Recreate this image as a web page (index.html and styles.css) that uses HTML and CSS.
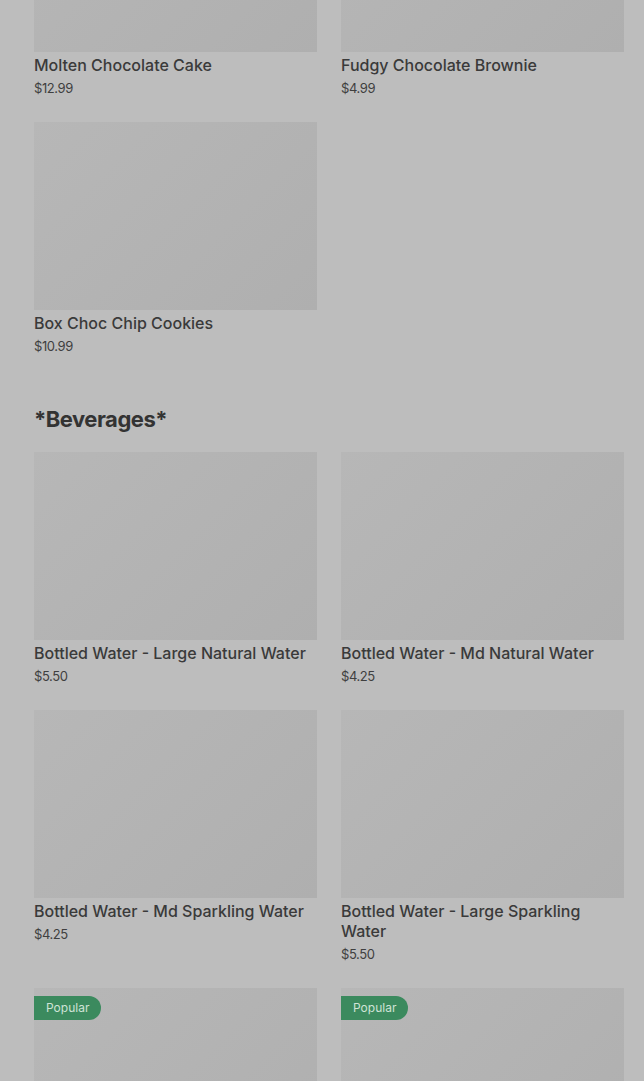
FILE: index.html
```html
<!DOCTYPE html>
<html lang="en">
<head>
    <meta charset="UTF-8">
    <meta name="viewport" content="width=device-width, initial-scale=1.0">
    <title>Menu</title>
    <link rel="stylesheet" href="styles.css">
</head>
<body>
    <div class="menu">
        <section class="category">
            <div class="item-grid">
                <div class="item">
                    <div class="item-image"></div>
                    <div class="item-name">Molten Chocolate Cake</div>
                    <div class="item-price">$12.99</div>
                </div>
                <div class="item">
                    <div class="item-image"></div>
                    <div class="item-name">Fudgy Chocolate Brownie</div>
                    <div class="item-price">$4.99</div>
                </div>
                <div class="item">
                    <div class="item-image"></div>
                    <div class="item-name">Box Choc Chip Cookies</div>
                    <div class="item-price">$10.99</div>
                </div>
            </div>
        </section>

        <section class="category">
            <h2 class="category-title">*Beverages*</h2>
            <div class="item-grid">
                <div class="item">
                    <div class="item-image"></div>
                    <div class="item-name">Bottled Water - Large Natural Water</div>
                    <div class="item-price">$5.50</div>
                </div>
                <div class="item">
                    <div class="item-image"></div>
                    <div class="item-name">Bottled Water - Md Natural Water</div>
                    <div class="item-price">$4.25</div>
                </div>
                <div class="item">
                    <div class="item-image"></div>
                    <div class="item-name">Bottled Water - Md Sparkling Water</div>
                    <div class="item-price">$4.25</div>
                </div>
                <div class="item">
                    <div class="item-image"></div>
                    <div class="item-name">Bottled Water - Large Sparkling Water</div>
                    <div class="item-price">$5.50</div>
                </div>
                <div class="item">
                    <div class="item-image"><span class="badge">Popular</span></div>
                </div>
                <div class="item">
                    <div class="item-image"><span class="badge">Popular</span></div>
                </div>
            </div>
        </section>
    </div>
</body>
</html>
```

FILE: styles.css
```css
body {
    margin: 0;
    font-family: Inter, 'Liberation Sans', sans-serif;
    background-color: #bdbdbd;
    color: #3a3a3a;
    overflow: hidden;
}
.menu {
    margin-top: -136px;
    padding: 0 20px 0 34px;
}
.category {
    margin-bottom: 47px;
}
.category-title {
    margin: 0 0 17px;
    font-size: 22px;
    line-height: 32px;
    font-weight: 700;
    letter-spacing: -0.5px;
    color: #333;
}
.item-grid {
    display: grid;
    grid-template-columns: 1fr 1fr;
    column-gap: 24px;
    row-gap: 24px;
}
.item-image {
    position: relative;
    height: 188px;
    background: linear-gradient(135deg, #b7b7b7, #afafaf);
}
.item-name {
    margin-top: 3px;
    font-size: 16px;
    line-height: 20px;
    font-weight: 500;
    color: #3a3a3a;
}
.item-price {
    margin-top: 3px;
    font-size: 13px;
    line-height: 20px;
    color: #3f3f3f;
    letter-spacing: -0.4px;
}
.badge {
    position: absolute;
    top: 8px;
    left: 0;
    height: 24px;
    line-height: 24px;
    padding: 0 12px;
    border-radius: 0 12px 12px 0;
    background-color: #3b8a5e;
    color: #cfe3d6;
    font-size: 12px;
}
```
